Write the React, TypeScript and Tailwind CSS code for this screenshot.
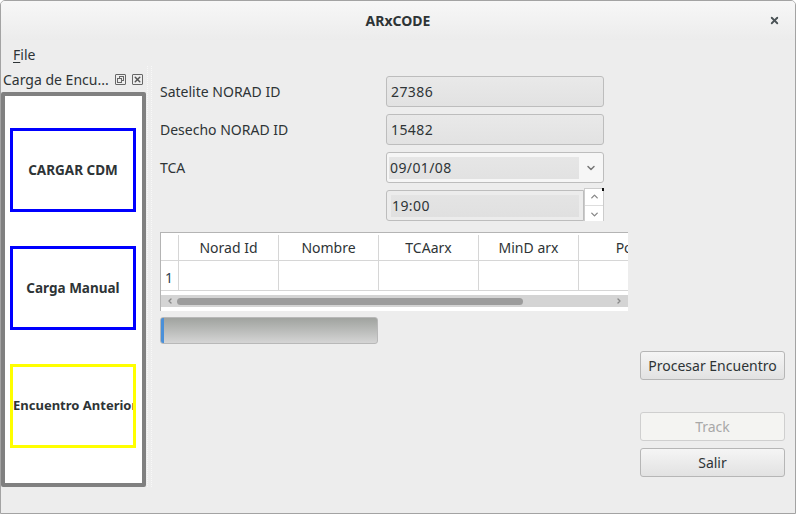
import { ChevronDown, ChevronUp, ChevronLeft, ChevronRight, X } from "lucide-react";

const font = { fontFamily: '"Noto Sans", "Open Sans", sans-serif' };

function Field({ value }: { value: string }) {
  return (
    <div className="h-[31px] w-[218px] rounded-[3px] border border-[#bdbdbd] bg-gradient-to-b from-[#e9e9e9] to-[#e2e2e2] px-[4px] flex items-center text-[14px] tracking-[0.4px] text-[#2e3436]">
      {value}
    </div>
  );
}

function PanelButton({ label, color, clip }: { label: string; color: string; clip?: boolean }) {
  return (
    <div
      className={`ml-[5px] mr-[6px] h-[84px] flex items-center border-[3px] ${color} font-bold text-[#2e3436] whitespace-nowrap ${
        clip ? "justify-start overflow-hidden text-[13px]" : "justify-center text-[13.5px]"
      }`}
    >
      {label}
    </div>
  );
}

function SideButton({ label, disabled }: { label: string; disabled?: boolean }) {
  return (
    <div
      className={`h-[29px] w-[145px] rounded-[3px] border flex items-center justify-center text-[14px] ${
        disabled
          ? "border-[#cfcfcf] bg-[#f4f4f2] text-[#a8a8a8]"
          : "border-[#b6b6b6] bg-gradient-to-b from-[#f5f5f5] to-[#e2e2e2] text-[#2e3436]"
      }`}
    >
      {label}
    </div>
  );
}

export default function App() {
  const cols = ["Norad Id", "Nombre", "TCAarx", "MinD arx"];
  return (
    <div style={font} className="w-[796px] h-[514px] bg-[#ededed] border border-[#a3a3a3] rounded-t-[5px] flex flex-col overflow-hidden text-[#2e3436]">
      {/* title bar */}
      <div className="h-[39px] shrink-0 bg-gradient-to-b from-[#f7f7f7] to-[#ececec] flex items-center relative">
        <div className="flex-1 text-center text-[14px] font-bold text-[#2e3436]">ARxCODE</div>
        <X className="absolute right-[15px] top-[14px] w-[11px] h-[11px] text-[#4a5356]" strokeWidth={4} />
      </div>
      {/* menu */}
      <div className="h-[26px] shrink-0 flex items-center px-[12px] pt-[2px] text-[14px]">
        <span>
          <span className="underline underline-offset-2">F</span>ile
        </span>
      </div>
      {/* body */}
      <div className="flex-1 flex">
        {/* dock */}
        <div className="w-[145px] shrink-0 flex flex-col">
          <div className="h-[26px] flex items-center pl-[2px] pr-[3px] text-[14px] text-[#2e3436]">
            <span className="flex-1 whitespace-nowrap">Carga de Encu...</span>
            <span className="w-[11px] h-[11px] border border-[#666] rounded-[1px] relative mr-[6px]">
              <span className="absolute left-[3px] top-[1px] w-[5px] h-[5px] border border-[#666]" />
              <span className="absolute left-[1px] top-[3px] w-[5px] h-[5px] border border-[#666] bg-[#ededed]" />
            </span>
            <span className="w-[11px] h-[11px] border border-[#666] rounded-[1px] flex items-center justify-center">
              <X className="w-[9px] h-[9px] text-[#555]" strokeWidth={4} />
            </span>
          </div>
          <div className="h-[395px] border-[4px] border-[#808080] rounded-[2px] bg-white flex flex-col pt-[32px] gap-[34px]">
            <PanelButton label="CARGAR CDM" color="border-[#0000ff]" />
            <PanelButton label="Carga Manual" color="border-[#0000ff]" />
            <PanelButton label="Encuentro Anterior" color="border-[#ffff00]" clip />
          </div>
        </div>
        {/* splitter */}
        <div className="w-[5px] ml-[1px] h-[421px] border-x border-dotted border-[#f8f8f8]" />
        {/* main */}
        <div className="flex-1 flex flex-col pl-[8px] pt-[10px] pr-[10px]">
          <div className="flex flex-col gap-[7px] w-[444px]">
            <div className="flex items-center justify-between text-[14px]">
              <span>Satelite NORAD ID</span>
              <Field value="27386" />
            </div>
            <div className="flex items-center justify-between text-[14px]">
              <span>Desecho NORAD ID</span>
              <Field value="15482" />
            </div>
            <div className="flex items-center justify-between text-[14px]">
              <span>TCA</span>
              <div className="h-[31px] w-[218px] rounded-[3px] border border-[#bdbdbd] bg-[#f6f6f6] flex items-center overflow-hidden">
                <div className="ml-[2px] h-[22px] flex-1 bg-gradient-to-b from-[#e6e6e6] to-[#e2e2e2] flex items-center px-[1px] text-[14px] tracking-[0.4px]">
                  09/01/08
                </div>
                <div className="w-[24px] flex items-center justify-center">
                  <ChevronDown className="w-[12px] h-[12px] text-[#777]" strokeWidth={3} />
                </div>
              </div>
            </div>
            <div className="flex justify-end">
              <div className="h-[31px] w-[218px] flex">
                <div className="flex-1 rounded-l-[3px] border border-[#bdbdbd] bg-[#ececec] flex items-center px-[4px]">
                  <div className="h-[22px] flex-1 bg-gradient-to-b from-[#e4e4e4] to-[#e0e0e0] flex items-center px-[1px] text-[14px] tracking-[0.4px]">19:00</div>
                </div>
                <div className="relative w-[20px] -mt-[2px] h-[33px] bg-white border-l border-t border-r border-[#cccccc] flex flex-col items-center justify-center">
                  <span className="absolute -right-px -top-px w-[2px] h-[3px] bg-[#111]" />
                  <ChevronUp className="w-[11px] h-[11px] text-[#888]" strokeWidth={3} />
                  <div className="w-full h-px bg-[#ddd] my-[3px]" />
                  <ChevronDown className="w-[11px] h-[11px] text-[#888]" strokeWidth={3} />
                </div>
              </div>
            </div>
          </div>
          {/* table */}
          <div className="mt-[11px] w-[468px] h-[79px] border-t border-l border-[#b4b4b4] bg-white flex flex-col overflow-hidden">
            <div className="h-[28px] shrink-0 flex border-b border-[#d6d6d6] text-[14px] pt-[2px]">
              <div className="w-[18px] shrink-0 border-r border-[#d6d6d6]" />
              {cols.map((c) => (
                <div key={c} className="w-[100px] shrink-0 border-r border-[#d6d6d6] flex items-center justify-center">
                  {c}
                </div>
              ))}
              <div className="w-[128px] shrink-0 flex items-center justify-center">Posicion</div>
            </div>
            <div className="h-[30px] shrink-0 flex border-b border-[#d6d6d6] text-[14px]">
              <div className="w-[18px] shrink-0 border-r border-[#d6d6d6] flex items-center pl-[4px] pt-[3px] text-[#304050]">1</div>
              {cols.map((c) => (
                <div key={c} className="w-[100px] shrink-0 border-r border-[#d6d6d6]" />
              ))}
              <div className="w-[128px] shrink-0" />
            </div>
            <div className="h-[4px] shrink-0" />
            <div className="h-[12px] shrink-0 bg-[#d4d4d4] flex items-center px-[5px]">
              <ChevronLeft className="w-[8px] h-[8px] text-[#888]" strokeWidth={4} />
              <div className="ml-[3px] w-[346px] h-[7px] rounded-full bg-[#9c9c9c]" />
              <div className="flex-1" />
              <ChevronRight className="w-[8px] h-[8px] text-[#888]" strokeWidth={4} />
            </div>
          </div>
          {/* progress */}
          <div className="mt-[6px] w-[218px] h-[27px] rounded-[3px] border border-[#b8b8b8] bg-gradient-to-b from-[#a0a39f] to-[#d5d5d5] flex">
            <div className="w-[3px] h-full rounded-l-[2px] bg-[#4a90d9]" />
          </div>
          {/* buttons */}
          <div className="mt-[7px] self-end flex flex-col">
            <SideButton label="Procesar Encuentro" />
            <div className="h-[32px]" />
            <SideButton label="Track" disabled />
            <div className="h-[7px]" />
            <SideButton label="Salir" />
          </div>
        </div>
      </div>
    </div>
  );
}
